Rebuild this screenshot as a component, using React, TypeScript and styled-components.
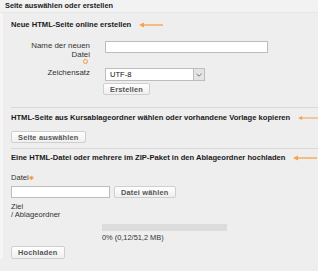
import React from "react";
import styled, { createGlobalStyle } from "styled-components";

const GlobalStyle = createGlobalStyle`
  html, body {
    margin: 0;
    padding: 0;
    background: #eeeeee;
    font-family: "Liberation Sans", Arial, sans-serif;
    color: #222;
  }
`;

const Page = styled.div`
  width: 318px;
  height: 271px;
  overflow: hidden;
  background: #eeeeee;
  font-size: 7.6px;
  line-height: 9px;
`;

const Header = styled.div`
  height: 12px;
  line-height: 12px;
  padding-left: 5px;
  background: #f2f2f2;
  border-bottom: 1px solid #e6e6e6;
  font-size: 7.4px;
  font-weight: bold;
  color: #222;
`;

const Body = styled.div`
  border-left: 3px solid #f5f5f5;
  padding-left: 8px;
`;

const Section = styled.div<{ $top: number; $bottom: number; $last?: boolean }>`
  padding-top: ${({ $top }) => $top}px;
  padding-bottom: ${({ $bottom }) => $bottom}px;
  border-bottom: ${({ $last }) => ($last ? "none" : "1px solid #d9d9d9")};
`;

const SectionTitle = styled.div`
  display: flex;
  align-items: center;
  gap: 8px;
  font-size: 7.6px;
  font-weight: bold;
  color: #1a1a1a;
  height: 10px;
  line-height: 10px;
  white-space: nowrap;
`;

const Arrow = () => (
  <svg width="24" height="6" viewBox="0 0 24 6">
    <line x1="3" y1="3" x2="24" y2="3" stroke="#f5a34a" strokeWidth="1.3" />
    <path d="M0 3 L5 0.5 L5 5.5 Z" fill="#f5a34a" />
  </svg>
);

const FormRow = styled.div<{ $mt: number }>`
  display: flex;
  align-items: flex-start;
  margin-top: ${({ $mt }) => $mt}px;
`;

const LabelCol = styled.div`
  width: 79px;
  text-align: right;
  font-size: 7.9px;
  line-height: 9px;
  color: #333;
  position: relative;
`;

const Required = styled.span`
  position: absolute;
  right: 2px;
  bottom: -5px;
  width: 3px;
  height: 3px;
  border: 1px solid #f29b3a;
  border-radius: 50%;
`;

const FieldCol = styled.div<{ $ml?: number }>`
  display: flex;
  margin-left: ${({ $ml }) => $ml ?? 15}px;
`;

const TextInput = styled.div<{ $width: number }>`
  width: ${({ $width }) => $width}px;
  height: 10px;
  background: #fff;
  border: 1px solid #bdbdbd;
`;

const Select = styled.div`
  display: flex;
  width: 98px;
  height: 11px;
  background: #fff;
  border: 1px solid #bdbdbd;
  font-size: 7.6px;
  line-height: 11px;
`;

const SelectText = styled.span`
  flex: 1;
  padding-left: 4px;
  color: #111;
`;

const SelectButton = styled.span`
  width: 10px;
  background: #e4e4e4;
  border-left: 1px solid #bdbdbd;
  display: flex;
  align-items: center;
  justify-content: center;
`;

const ButtonRow = styled.div<{ $mt: number }>`
  display: flex;
  margin-top: ${({ $mt }) => $mt}px;
`;

const Button = styled.div<{ $h?: number }>`
  display: flex;
  align-items: center;
  padding: 0 6px;
  height: ${({ $h }) => $h ?? 10}px;
  background: linear-gradient(#ffffff, #efefef);
  border: 1px solid #cfcfcf;
  border-radius: 2px;
  font-size: 7.4px;
  font-weight: bold;
  color: #555;
  letter-spacing: 0.2px;
  white-space: nowrap;
`;

const SmallLabel = styled.div<{ $mt?: number }>`
  font-size: 7.6px;
  line-height: 8px;
  color: #333;
  margin-top: ${({ $mt }) => $mt ?? 0}px;
`;

const Star = styled.span`
  color: #f29b3a;
  font-size: 6px;
  vertical-align: top;
`;

const FileRow = styled.div`
  display: flex;
  align-items: center;
  gap: 4px;
  margin-top: 4px;
`;

const Progress = styled.div`
  margin-left: 91px;
  margin-top: 5px;
  width: 125px;
  height: 7px;
  background: #dcdcdc;
`;

const ProgressText = styled.div`
  margin-left: 91px;
  margin-top: 2px;
  font-size: 7.4px;
  line-height: 9px;
  color: #333;
`;

export default function App() {
  return (
    <Page>
      <GlobalStyle />
      <Header>Seite auswählen oder erstellen</Header>
      <Body>
        <Section $top={7} $bottom={12}>
          <SectionTitle>
            Neue HTML-Seite online erstellen
            <Arrow />
          </SectionTitle>
          <FormRow $mt={11}>
            <LabelCol>
              Name der neuen
              <br />
              Datei
              <Required />
            </LabelCol>
            <FieldCol>
              <TextInput $width={161} />
            </FieldCol>
          </FormRow>
          <FormRow $mt={9}>
            <LabelCol>Zeichensatz</LabelCol>
            <FieldCol>
              <Select>
                <SelectText>UTF-8</SelectText>
                <SelectButton>
                  <svg width="6" height="4" viewBox="0 0 6 4">
                    <path d="M0.5 0.8 L3 3.2 L5.5 0.8" stroke="#777" strokeWidth="1" fill="none" />
                  </svg>
                </SelectButton>
              </Select>
            </FieldCol>
          </FormRow>
          <ButtonRow $mt={2}>
            <FieldCol $ml={92}>
              <Button>Erstellen</Button>
            </FieldCol>
          </ButtonRow>
        </Section>
        <Section $top={5} $bottom={5}>
          <SectionTitle>
            HTML-Seite aus Kursablageordner wählen oder vorhandene Vorlage kopieren
            <Arrow />
          </SectionTitle>
          <ButtonRow $mt={8}>
            <Button>Seite auswählen</Button>
          </ButtonRow>
        </Section>
        <Section $top={4} $bottom={0} $last>
          <SectionTitle>
            Eine HTML-Datei oder mehrere im ZIP-Paket in den Ablageordner hochladen
            <Arrow />
          </SectionTitle>
          <SmallLabel $mt={11}>
            Datei<Star>✱</Star>
          </SmallLabel>
          <FileRow>
            <TextInput $width={97} />
            <Button>Datei wählen</Button>
          </FileRow>
          <SmallLabel $mt={5}>Ziel</SmallLabel>
          <SmallLabel>/ Ablageordner</SmallLabel>
          <Progress />
          <ProgressText>0% (0,12/51,2 MB)</ProgressText>
          <ButtonRow $mt={4}>
            <Button $h={11}>Hochladen</Button>
          </ButtonRow>
        </Section>
      </Body>
    </Page>
  );
}
